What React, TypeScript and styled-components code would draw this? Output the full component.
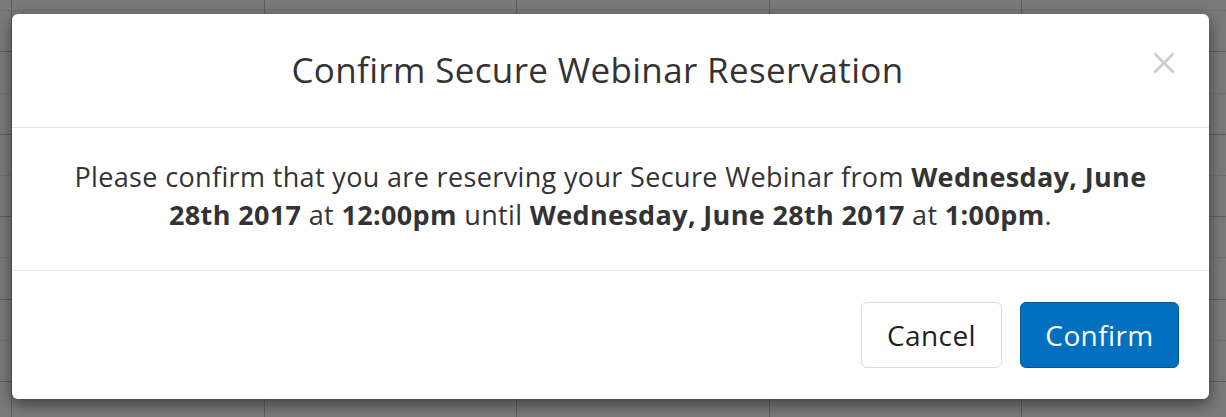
import styled, { createGlobalStyle } from "styled-components"

const GlobalStyle = createGlobalStyle`
  html, body {
    margin: 0;
    padding: 0;
    background: #ffffff;
    font-family: "Open Sans", Lato, Arial, sans-serif;
  }
`

const HOURS = 12

const Page = styled.div`
  position: relative;
  width: 1226px;
  height: 417px;
  overflow: hidden;
  background: #ffffff;
`

const CalendarGrid = styled.div`
  display: grid;
  grid-template-columns: 11px repeat(5, 252.5px);
  margin-top: -30px;
`

const Column = styled.div<{ $gutter?: boolean }>`
  display: flex;
  flex-direction: column;
  border-left: ${(p) => (p.$gutter ? "none" : "1px solid #c4c4c4")};
`

const Slot = styled.div<{ $half?: boolean }>`
  height: 40.2px;
  border-bottom: 1px ${(p) => (p.$half ? "dotted #dedede" : "solid #c4c4c4")};
`

const Backdrop = styled.div`
  position: absolute;
  inset: 0;
  background: rgba(0, 0, 0, 0.52);
`

const Modal = styled.div`
  position: absolute;
  left: 12px;
  top: 14px;
  width: 1197px;
  background: #ffffff;
  border-radius: 6px;
  box-shadow: 0 5px 15px rgba(0, 0, 0, 0.5);
  color: #333333;
`

const Header = styled.div`
  display: flex;
  align-items: center;
  height: 113px;
  padding: 0 34px 0 30px;
  border-bottom: 1px solid #e5e5e5;
`

const Title = styled.h4`
  flex: 1;
  margin: 0;
  text-align: center;
  font-size: 35px;
  font-weight: 400;
  letter-spacing: 0.35px;
  line-height: 1.1;
  color: #333333;
`

const Close = styled.button`
  align-self: flex-start;
  margin-top: 37px;
  width: 22px;
  height: 24px;
  padding: 0;
  border: 0;
  background: transparent;
  cursor: pointer;
  display: flex;
`

const Body = styled.div`
  padding: 30px 30px 36px;
  border-bottom: 1px solid #e5e5e5;
  text-align: center;
  font-size: 27px;
  letter-spacing: 0.35px;
  line-height: 38px;
  white-space: nowrap;

  b {
    font-weight: 700;
  }
`

const Footer = styled.div`
  display: flex;
  justify-content: flex-end;
  gap: 18px;
  padding: 31px 30px;
`

const Button = styled.button<{ $primary?: boolean }>`
  height: 66px;
  min-width: ${(p) => (p.$primary ? "159px" : "141px")};
  padding: 0 24px;
  border-radius: 6px;
  font-family: inherit;
  font-size: 28px;
  font-weight: 400;
  letter-spacing: 0.4px;
  cursor: pointer;
  background: ${(p) => (p.$primary ? "#0270bf" : "#ffffff")};
  color: ${(p) => (p.$primary ? "#ffffff" : "#1f1f1f")};
  border: 1px solid ${(p) => (p.$primary ? "#02599c" : "#dcdcdc")};
`

const CloseIcon = () => (
  <svg width="22" height="24" viewBox="0 0 22 24">
    <path d="M1.5 2.5 L20.5 21.5 M20.5 2.5 L1.5 21.5" stroke="#cccccc" strokeWidth="2.6" fill="none" />
  </svg>
)

export default function App() {
  const columns = Array.from({ length: 6 })
  const slots = Array.from({ length: HOURS * 2 })

  return (
    <>
      <GlobalStyle />
      <Page>
        <CalendarGrid>
          {columns.map((_, c) => (
            <Column key={c} $gutter={c === 0}>
              {slots.map((_, s) => (
                <Slot key={s} $half={s % 2 === 0} />
              ))}
            </Column>
          ))}
        </CalendarGrid>
        <Backdrop />
        <Modal role="dialog">
          <Header>
            <Title>Confirm Secure Webinar Reservation</Title>
            <Close aria-label="Close">
              <CloseIcon />
            </Close>
          </Header>
          <Body>
            Please confirm that you are reserving your Secure Webinar from <b>Wednesday, June</b>
            <br />
            <b>28th 2017</b> at <b>12:00pm</b> until <b>Wednesday, June 28th 2017</b> at <b>1:00pm</b>.
          </Body>
          <Footer>
            <Button>Cancel</Button>
            <Button $primary>Confirm</Button>
          </Footer>
        </Modal>
      </Page>
    </>
  )
}
